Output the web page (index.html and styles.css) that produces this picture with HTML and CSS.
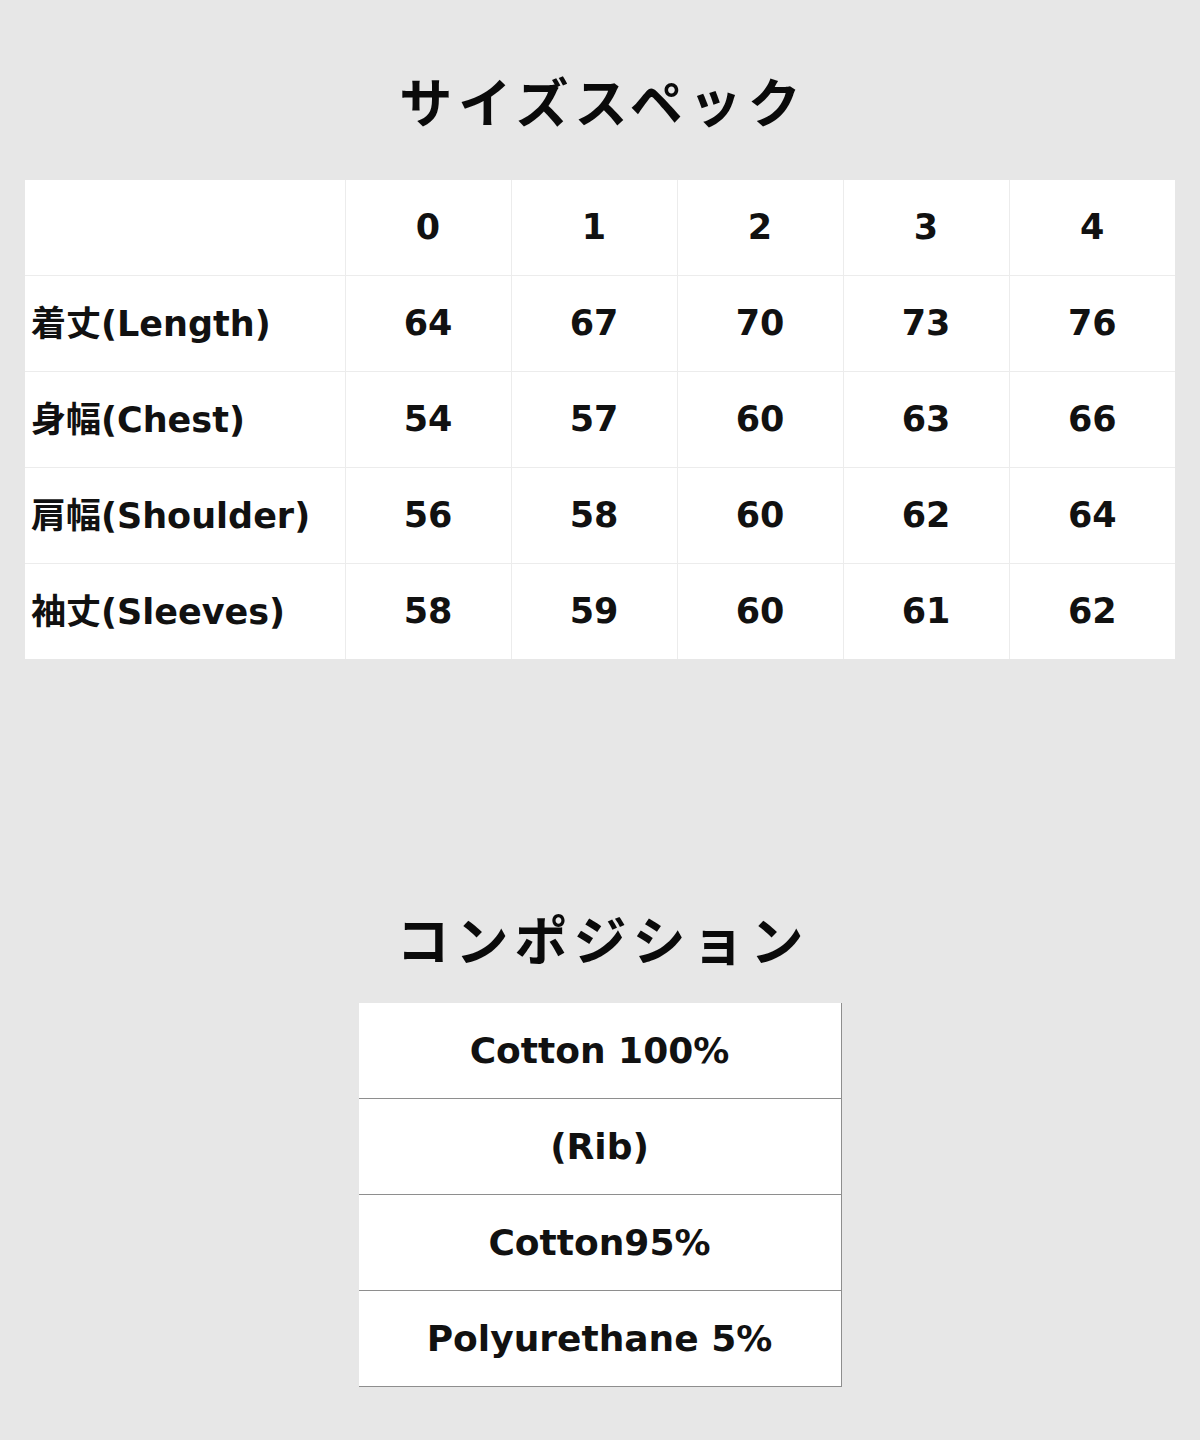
FILE: index.html
```html
<!DOCTYPE html>
<html lang="ja">
<head>
<meta charset="utf-8">
<title>サイズスペック</title>
<link rel="stylesheet" href="styles.css">
</head>
<body>
<main class="page">
  <section class="spec">
    <h2 class="title">サイズスペック</h2>
    <table class="size-table">
      <colgroup>
        <col class="col-label">
        <col class="col-size"><col class="col-size"><col class="col-size"><col class="col-size"><col class="col-size">
      </colgroup>
      <tr><td class="label"></td><td>0</td><td>1</td><td>2</td><td>3</td><td>4</td></tr>
      <tr><td class="label">着丈(Length)</td><td>64</td><td>67</td><td>70</td><td>73</td><td>76</td></tr>
      <tr><td class="label">身幅(Chest)</td><td>54</td><td>57</td><td>60</td><td>63</td><td>66</td></tr>
      <tr><td class="label">肩幅(Shoulder)</td><td>56</td><td>58</td><td>60</td><td>62</td><td>64</td></tr>
      <tr><td class="label">袖丈(Sleeves)</td><td>58</td><td>59</td><td>60</td><td>61</td><td>62</td></tr>
    </table>
  </section>
  <section class="composition">
    <h2 class="title">コンポジション</h2>
    <table class="comp-table">
      <tr><td>Cotton 100%</td></tr>
      <tr><td>(Rib)</td></tr>
      <tr><td>Cotton95%</td></tr>
      <tr><td>Polyurethane 5%</td></tr>
    </table>
  </section>
</main>
</body>
</html>
```
FILE: styles.css
```css
html, body {
  margin: 0;
  padding: 0;
  background: #e7e7e7;
}

.page {
  padding-top: 60px;
  color: #111;
  font-family: "DejaVu Sans", "Noto Sans CJK JP", sans-serif;
}

.title {
  margin: 0 0 40px;
  line-height: 80px;
  height: 80px;
  text-align: center;
  font-family: "Noto Sans CJK JP", sans-serif;
  font-weight: 700;
  font-size: 53px;
  letter-spacing: 6px;
  padding-left: 6px;
  color: #0a0a0a;
}

.size-table {
  width: 1150px;
  margin: 0 25px;
  table-layout: fixed;
  border-collapse: collapse;
  border: hidden;
  background: #fff;
}

.col-label { width: 320px; }
.col-size { width: 166px; }

.size-table td {
  height: 95px;
  padding: 0;
  border: 1px solid #ececec;
  text-align: center;
  vertical-align: middle;
  font-size: 35px;
  line-height: 1;
  font-weight: 700;
  white-space: nowrap;
}

.size-table td.label {
  height: 93px;
  text-align: left;
  padding: 2px 0 0 6px;
}

.composition {
  margin-top: 239px;
}

.composition .title {
  margin-bottom: 25px;
}

.comp-table {
  width: 483px;
  margin: 0 auto;
  border-collapse: collapse;
  background: #fff;
  border-right: 1px solid #8e8e8e;
}

.comp-table td {
  height: 95px;
  padding: 0;
  border-bottom: 1px solid #8e8e8e;
  text-align: center;
  vertical-align: middle;
  font-size: 36px;
  font-weight: 700;
}
```
